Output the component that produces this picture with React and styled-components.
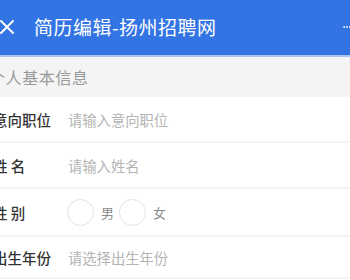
import React from 'react'
import styled, { createGlobalStyle } from 'styled-components'

const GlobalStyle = createGlobalStyle`
  html, body {
    margin: 0;
    padding: 0;
    background: #fff;
    overflow: hidden;
  }
  body {
    font-family: "Noto Sans CJK SC", "Noto Sans", sans-serif;
  }
`

const Page = styled.div`
  width: 350px;
  height: 280px;
  overflow: hidden;
  background: #fff;
`

const TopBar = styled.div`
  height: 55px;
  background: #3274e4;
  border-bottom: 2px solid #a9c4f1;
  display: flex;
  align-items: center;
  color: #fff;
`

const CloseBtn = styled.div`
  width: 34px;
  flex-shrink: 0;
  display: flex;
  align-items: center;
  margin-top: -1px;
`

const Title = styled.h1`
  margin: 0;
  font-size: 19px;
  font-weight: 400;
  letter-spacing: 0.5px;
  line-height: 1;
  flex: 1;
  white-space: nowrap;
  margin-top: -2px;
`

const More = styled.div`
  width: 7px;
  flex-shrink: 0;
  display: flex;
  align-items: center;
  overflow: hidden;
  margin-top: -2px;
`

const SectionHead = styled.div`
  height: 40px;
  background: #f4f4f4;
  display: flex;
  align-items: center;
  color: #9a9a9a;
  font-size: 16px;
  > span {
    margin-left: -11px;
    letter-spacing: 0.6px;
    white-space: nowrap;
  }
`

const Row = styled.div`
  height: ${p => p.$h}px;
  border-bottom: 2px solid #f4f4f4;
  display: flex;
  align-items: center;
`

const Label = styled.div`
  width: 75px;
  margin-left: -7px;
  flex-shrink: 0;
  font-size: 14.5px;
  font-weight: 500;
  color: #333;
  white-space: pre;
`

const Placeholder = styled.div`
  font-size: 14.3px;
  color: #b4b4b4;
`

const RadioGroup = styled.div`
  display: flex;
  align-items: center;
  margin-left: -1px;
`

const Circle = styled.span`
  width: 25px;
  height: 25px;
  border-radius: 50%;
  border: 1px solid #e2e2e2;
  display: inline-block;
`

const RadioText = styled.span`
  font-size: 13px;
  color: #8a8a8a;
  margin: 0 5px 0 7px;
`

const rows = [
  { label: '意向职位', hint: '请输入意向职位', h: 44 },
  { label: '姓 名', hint: '请输入姓名', h: 44 },
  { label: '性 别', radio: ['男', '女'], h: 46 },
  { label: '出生年份', hint: '请选择出生年份', h: 40 },
]

export default function App() {
  return (
    <Page>
      <GlobalStyle />
      <TopBar>
        <CloseBtn>
          <svg width="14" height="14" viewBox="0 0 14 14">
            <path d="M1 1 L13 13 M13 1 L1 13" stroke="#fff" strokeWidth="2" strokeLinecap="round" />
          </svg>
        </CloseBtn>
        <Title>简历编辑-扬州招聘网</Title>
        <More>
          <svg width="12" height="4" viewBox="0 0 12 4">
            <circle cx="2" cy="2" r="1.8" fill="#e6eefc" />
            <circle cx="7" cy="2" r="1.8" fill="#e6eefc" />
            <circle cx="12" cy="2" r="1.8" fill="#e6eefc" />
          </svg>
        </More>
      </TopBar>
      <SectionHead>
        <span>个人基本信息</span>
      </SectionHead>
      {rows.map(r => (
        <Row key={r.label} $h={r.h}>
          <Label>{r.label}</Label>
          {r.radio ? (
            <RadioGroup>
              {r.radio.map(t => (
                <React.Fragment key={t}>
                  <Circle />
                  <RadioText>{t}</RadioText>
                </React.Fragment>
              ))}
            </RadioGroup>
          ) : (
            <Placeholder>{r.hint}</Placeholder>
          )}
        </Row>
      ))}
    </Page>
  )
}
